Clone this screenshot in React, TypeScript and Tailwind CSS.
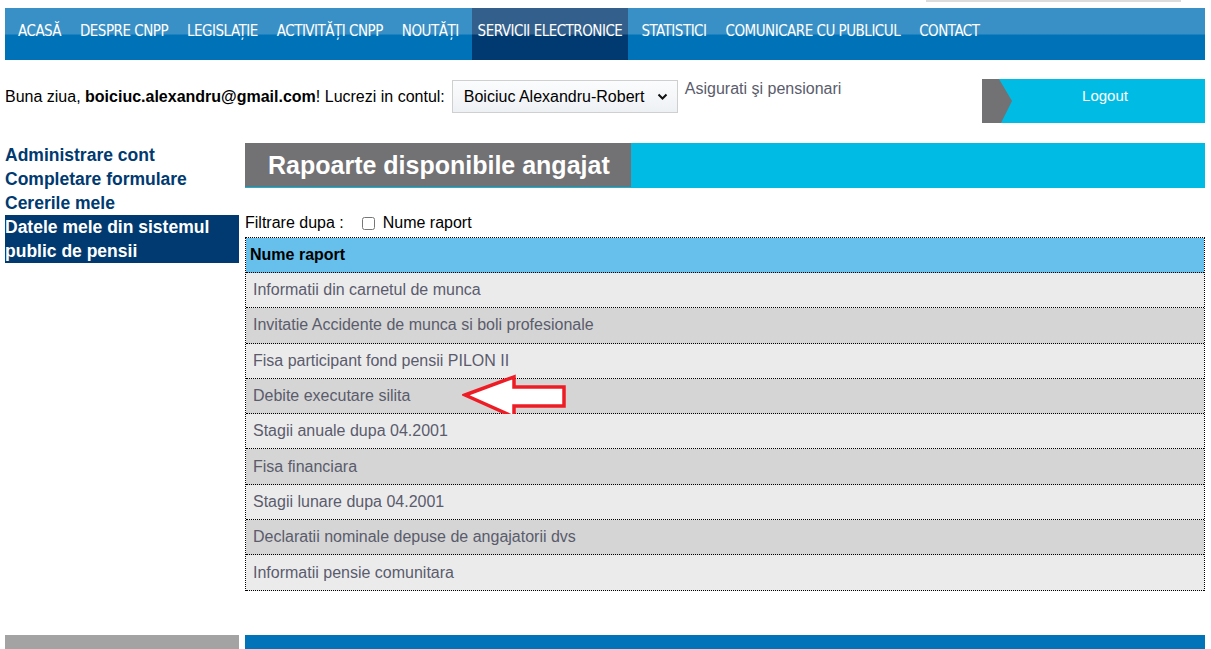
import { useState } from "react";

const navItems = [
  "ACASĂ",
  "DESPRE CNPP",
  "LEGISLAȚIE",
  "ACTIVITĂȚI CNPP",
  "NOUTĂȚI",
  "SERVICII ELECTRONICE",
  "STATISTICI",
  "COMUNICARE CU PUBLICUL",
  "CONTACT",
];

const rapoarte = [
  "Informatii din carnetul de munca",
  "Invitatie Accidente de munca si boli profesionale",
  "Fisa participant fond pensii PILON II",
  "Debite executare silita",
  "Stagii anuale dupa 04.2001",
  "Fisa financiara",
  "Stagii lunare dupa 04.2001",
  "Declaratii nominale depuse de angajatorii dvs",
  "Informatii pensie comunitara",
];

const sideLinks = ["Administrare cont", "Completare formulare", "Cererile mele"];

const App = () => {
  const [byName, setByName] = useState<boolean>(false);
  return (
    <div className="min-h-screen bg-white font-['Liberation_Sans',Arial,sans-serif] text-black overflow-hidden">
      <div className="ml-[5px] w-[1200px]">
        {/* top search strip */}
        <div className="h-[8px] flex justify-end pr-[24px]">
          <div className="w-[255px] h-[2px] bg-[#dcdcdc]" />
        </div>

        {/* navigation */}
        <nav className="h-[52px] flex gap-[7px] pl-[7px] bg-[linear-gradient(#3890c6_0,#3890c6_50%,#0072b8_52%,#0072b8_100%)] font-['Liberation_Sans_Narrow','DejaVu_Sans_Condensed',sans-serif] [font-stretch:condensed] text-[15px] tracking-[-0.5px] text-white">
          {navItems.map((item) => (
            <a
              key={item}
              href="#"
              className={
                item === "SERVICII ELECTRONICE"
                  ? "h-full px-[6px] pt-[13px] leading-[20px] whitespace-nowrap bg-[linear-gradient(#335f8c_0,#335f8c_50%,#003a70_52%,#003a70_100%)]"
                  : "h-full px-[6px] pt-[13px] leading-[20px] whitespace-nowrap"
              }
            >
              {item}
            </a>
          ))}
        </nav>

        {/* greeting row */}
        <div className="mt-[19px] h-[44px] flex items-start text-[16px]">
          <div className="flex items-start">
            <span className="mt-[8px] leading-[20px] whitespace-nowrap">
              Buna ziua, <b>boiciuc.alexandru@gmail.com</b>! Lucrezi in contul:
            </span>
            <div className="ml-[7px] mt-[1px] w-[226px] h-[33px] border border-[#cfcfcf] bg-[linear-gradient(#fbfcfd,#eef1f4)] flex items-center justify-between pl-[11px] pr-[9px]">
              <span className="leading-[20px] whitespace-nowrap">Boiciuc Alexandru-Robert</span>
              <svg width="11" height="8" viewBox="0 0 11 8">
                <path d="M1.5 1.5 L5.5 5.5 L9.5 1.5" fill="none" stroke="#111" strokeWidth="2" />
              </svg>
            </div>
            <span className="ml-[7px] leading-[20px] text-[#5a5c6c] whitespace-nowrap">Asigurati şi pensionari</span>
          </div>
          <a href="#" className="ml-auto relative w-[223px] h-[44px] bg-[#00bce4] text-white text-[15px] pl-[23px] pt-[7px] leading-[20px] text-center">
            <svg className="absolute left-0 top-0" width="30" height="44" viewBox="0 0 30 44">
              <polygon points="0,0 17,0 30,22 19,44 0,44" fill="#727174" />
            </svg>
            Logout
          </a>
        </div>

        {/* body */}
        <div className="mt-[20px] flex gap-[6px]">
          <aside className="w-[234px] text-[17.5px] font-bold leading-[24px]">
            {sideLinks.map((l) => (
              <a key={l} href="#" className="block text-[#003a70]">
                {l}
              </a>
            ))}
            <a href="#" className="block bg-[#003a70] text-white">
              Datele mele din sistemul public de pensii
            </a>
          </aside>

          <main className="flex-1">
            <div className="h-[45px] bg-[#00bce4] flex">
              <h1 className="w-[386px] h-[44px] bg-[#727174] text-white text-[25px] font-bold leading-[44px] pl-[23px]">
                Rapoarte disponibile angajat
              </h1>
            </div>

            <div className="mt-[21px] h-[28px] flex items-center text-[16px] leading-[20px]">
              <span>Filtrare dupa :</span>
              <label className="ml-[18px] flex items-center gap-[8px]">
                <input
                  type="checkbox"
                  checked={byName}
                  onChange={(e) => setByName(e.target.checked)}
                  className="w-[13px] h-[13px] m-0"
                />
                Nume raport
              </label>
            </div>

            <div className="border-l border-r border-t border-dotted border-black text-[16px]">
              <div className="h-[35px] bg-[#66c0eb] font-bold flex items-center pl-[4px] border-b border-dotted border-black">
                Nume raport
              </div>
              {rapoarte.map((r, i) => (
                <div
                  key={r}
                  className={
                    i % 2 === 0
                      ? "relative h-[35.3px] bg-[#ecebec] text-[#5a5c6c] flex items-center pl-[7px] border-b border-dotted border-black"
                      : "relative h-[35.3px] bg-[#d5d5d5] text-[#5a5c6c] flex items-center pl-[7px] border-b border-dotted border-black"
                  }
                >
                  {r}
                  {r === "Debite executare silita" && (
                    <svg className="absolute left-[216px] top-[-5px]" width="106" height="48" viewBox="0 0 106 48">
                      <polygon
                        points="3,21 52,3 52,13 102,13 102,32 52,32 52,43"
                        fill="#ffffff"
                        stroke="#ee1c25"
                        strokeWidth="3.5"
                        strokeLinejoin="miter"
                      />
                    </svg>
                  )}
                </div>
              ))}
            </div>
          </main>
        </div>

        {/* footer strip */}
        <div className="mt-[44px] flex gap-[6px] h-[20px]">
          <div className="w-[234px] bg-[#a3a3a3]" />
          <div className="flex-1 bg-[#0073b9]" />
        </div>
      </div>
    </div>
  );
};

export default App;
